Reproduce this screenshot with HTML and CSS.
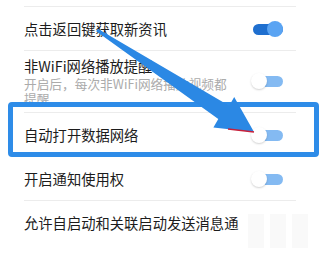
FILE: index.html
```html
<!DOCTYPE html>
<html lang="zh-CN">
<head>
  <meta charset="UTF-8" />
  <meta name="viewport" content="width=device-width, initial-scale=1.0"/>
  <title>设置</title>
  <link rel="stylesheet" href="styles.css">
</head>
<body>
  <div class="screen">
    <div class="list">
      <div class="row">
        <span class="title">点击返回键获取新资讯</span>
        <span class="switch on"></span>
      </div>

      <div class="row row-tall">
        <div class="text">
          <div class="title">非WiFi网络播放提醒</div>
          <div class="desc">开启后，每次非WiFi网络播放视频都提醒</div>
        </div>
        <span class="switch"></span>
      </div>

      <div class="row">
        <span class="title">自动打开数据网络</span>
        <span class="switch"></span>
      </div>

      <div class="row">
        <span class="title">开启通知使用权</span>
        <span class="switch"></span>
      </div>

      <div class="row">
        <span class="title">允许自启动和关联启动发送消息通</span>
      </div>
    </div>

    <!-- 标注：高亮框和箭头 -->
    <div class="highlight"></div>
    <svg class="arrow" width="332" height="256" viewBox="0 0 332 256">
      <polygon points="97.8,28.8 229.2,105.8 234.2,96.9 254,132 213.4,127.5 218.3,119.0 96.2,31.2" fill="#2b88e4"/>
      <line x1="228" y1="129" x2="254" y2="132" stroke="#c8203a" stroke-width="1.4"/>
    </svg>

    <!-- 水印 -->
    <div class="watermark">
      <span></span><span></span><span></span>
    </div>
  </div>
</body>
</html>
```

FILE: styles.css
```css
/* Estilos gerais */
body {
  margin: 0;
  background-color: #fff;
  font-family: "Noto Sans CJK SC", "Noto Sans", sans-serif;
}

.screen {
  position: relative;
  width: 332px;
  height: 256px;
  overflow: hidden;
  background-color: #fff;
}

/* Lista */
.list {
  padding: 6px 36px 0 24px;
}

.row {
  display: flex;
  align-items: center;
  justify-content: space-between;
  height: 43px;
  border-top: 1px solid #ececec;
}

.row-tall {
  height: auto;
  padding: 5px 0 6px;
}

.title {
  font-size: 14.3px;
  line-height: 20px;
  color: #1c1c1c;
  white-space: nowrap;
}

.text {
  width: 206px;
}

.desc {
  font-size: 12.7px;
  line-height: 15px;
  color: #ababab;
}

/* Interruptor */
.switch {
  position: relative;
  width: 30px;
  height: 16px;
  margin-right: 13px;
  flex-shrink: 0;
}

.switch::before {
  content: "";
  position: absolute;
  left: 4px;
  right: 0;
  top: 3px;
  height: 11px;
  border-radius: 6px;
  background-color: #84baf2;
}

.switch::after {
  content: "";
  position: absolute;
  left: -2px;
  top: 0;
  width: 16px;
  height: 16px;
  border-radius: 50%;
  background-color: #fff;
  box-shadow: 0 1px 2px rgba(0, 0, 0, 0.18);
}

.switch.on::before {
  left: 0;
  background-color: #1f6fcf;
}

.switch.on::after {
  left: auto;
  right: 0;
  background-color: #5aa4f3;
  box-shadow: none;
}

/* Anotações */
.highlight {
  position: absolute;
  left: 8px;
  top: 102px;
  width: 301px;
  height: 45px;
  border: 5px solid #2e8ce8;
  border-radius: 4px;
}

.arrow {
  position: absolute;
  left: 0;
  top: 0;
  pointer-events: none;
}

.watermark {
  position: absolute;
  left: 248px;
  top: 214px;
  display: flex;
  gap: 6px;
  opacity: 0.3;
}

.watermark span {
  width: 16px;
  height: 34px;
  background-color: #eeeeee;
}
```
